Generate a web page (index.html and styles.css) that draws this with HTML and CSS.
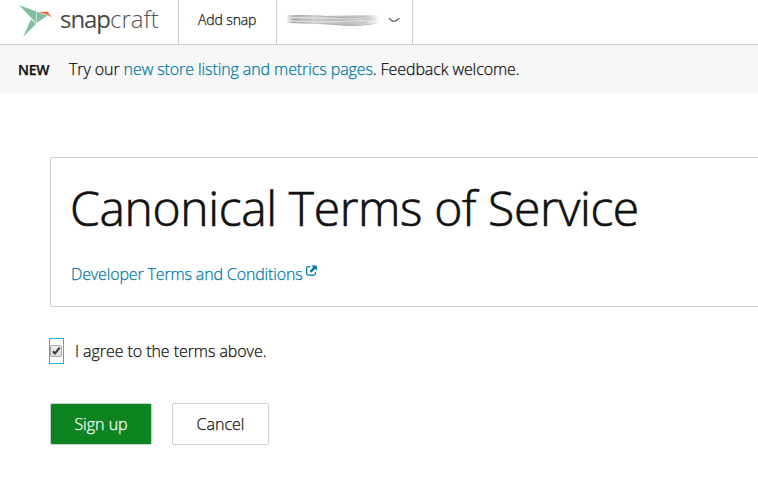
FILE: index.html
```
<!DOCTYPE html>
<html lang="en">
<head>
<meta charset="utf-8">
<title>Canonical Terms of Service</title>
<link rel="stylesheet" href="styles.css">
</head>
<body>
<header class="header">
  <a class="logo">
    <svg class="logo-mark" width="34" height="32" viewBox="0 0 34 32">
      <path fill="#82bea0" d="M0 0 17.200 6.600V18.300z"/>
      <path fill="#82bea0" d="M17.700 6.800 28.600 10.500 17.700 18z"/>
      <path fill="#82bea0" d="M4.200 31.700 12 14.200 17 18.900z"/>
      <path fill="#fa6441" d="M19.500 6.800H28.900L32.600 12.400 28.800 10z"/>
    </svg>
    <span class="logo-text"><span class="logo-strong">snap</span><span class="logo-light">craft</span></span>
  </a>
  <a class="nav-item nav-add">Add snap</a>
  <div class="nav-item nav-user">
    <svg class="smear" width="94" height="14" viewBox="0 0 94 14" fill="none">
      <defs>
        <linearGradient id="smear" gradientUnits="userSpaceOnUse" x1="0" y1="0" x2="94" y2="0">
          <stop offset="0" stop-color="#aaa" stop-opacity="0"/>
          <stop offset=".08" stop-color="#a6a6a6"/>
          <stop offset=".3" stop-color="#c2c2c2"/>
          <stop offset=".62" stop-color="#aaa"/>
          <stop offset=".85" stop-color="#b8b8b8"/>
          <stop offset="1" stop-color="#ccc" stop-opacity="0"/>
        </linearGradient>
      </defs>
      <path fill="url(#smear)" opacity=".75" d="M1 2.500 30 3 60 2.500 93 2V11L60 12.500 30 11 1 10z"/>
      <path stroke="url(#smear)" stroke-width="1.200" d="M1 3Q24 2 46 4T93 4M1 6Q30 8 52 6T93 7M1 9.500Q24 9 50 11.500T93 9.500"/>
      <path stroke="#eee" stroke-width="1" opacity=".7" d="M3 4.600Q30 5 48 5.500T88 5M3 8Q30 10 56 8.500T88 8.500"/>
    </svg>
    <svg class="chevron" width="12" height="6" viewBox="0 0 12 6"><path fill="none" stroke="#666" stroke-width="1.300" d="M.6 1.200 4 3.600Q6 5 8 3.600L11.400 1.200"/></svg>
  </div>
</header>
<div class="banner">
  <strong class="banner-tag">NEW</strong>
  <p class="banner-text">Try our <a class="link">new store listing and metrics pages</a>. Feedback welcome.</p>
</div>
<main class="main">
  <section class="card">
    <h1 class="title">Canonical Terms of Service</h1>
    <p class="terms"><a class="link">Developer Terms and Conditions</a><svg class="external" width="11" height="11" viewBox="0 0 11 11"><path fill="none" stroke="#007aa6" stroke-width="1.200" d="M4.500 1.700H2Q.7 1.700.7 3V9Q.7 10.200 2 10.200H8Q9.300 10.200 9.300 9V6.800"/><path fill="#007aa6" d="M5.400.4H10.800V5.800L9 4 5.300 7.700 3.600 6 7.200 2.200z"/></svg></p>
  </section>
  <label class="agree">
    <span class="checkbox"><svg width="13" height="13" viewBox="0 0 13 13"><defs><linearGradient id="box" x2="0" y2="1"><stop stop-color="#eee"/><stop offset="1" stop-color="#ddd"/></linearGradient></defs><rect x=".5" y=".5" width="11" height="11" rx="1.500" fill="url(#box)" stroke="#a8a8a8"/><path fill="none" stroke="#3c3c3c" stroke-width="2.100" d="M2.800 6.300 5 8.500 9.700 2.600"/></svg></span>
    <span class="agree-text">I agree to the terms above.</span>
  </label>
  <div class="actions">
    <button class="button button-primary">Sign up</button>
    <button class="button button-cancel">Cancel</button>
  </div>
</main>
</body>
</html>
```
FILE: styles.css
```
* { box-sizing: border-box; }
body {
  margin: 0;
  background: #fff;
  color: #111;
  font: 300 16px/24px "Open Sans", sans-serif;
  -webkit-text-stroke: .25px;
}
h1, p { margin: 0; }
.header {
  display: flex;
  height: 45px;
  border-bottom: 1px solid #cdcdcd;
}
.logo {
  display: flex;
  width: 178px;
  padding-left: 19px;
}
.logo-mark { margin-top: 5px; flex: none; }
.logo-text {
  margin: 2px 0 0 7px;
  color: #464646;
  font-size: 24px;
  line-height: 34px;
  white-space: nowrap;
  -webkit-text-stroke: 0;
}
.logo-strong { font-weight: 400; letter-spacing: -1.05px; }
.logo-light { font-weight: 300; color: #555; }
.nav-item {
  display: flex;
  align-items: center;
  border-left: 1px solid #cdcdcd;
}
.nav-add {
  width: 98px;
  padding: 0 0 4px 19px;
  font-size: 14px;
  letter-spacing: -.12px;
}
.nav-user {
  width: 137px;
  padding: 0 0 4px 9px;
  border-right: 1px solid #cdcdcd;
}
.smear { filter: blur(.6px); }
.chevron { margin-left: 8px; }
.banner {
  display: flex;
  align-items: center;
  height: 48px;
  padding-left: 18px;
  background: #f7f7f7;
}
.banner-tag {
  width: 51px;
  padding-top: 1px;
  font-size: 14px;
  font-weight: 600;
  letter-spacing: -.25px;
}
.banner-text { letter-spacing: -.09px; white-space: nowrap; }
.link { color: #007aa6; }
.main { padding: 64px 0 0 50px; }
.card {
  height: 150px;
  padding: 20px 0 20px 20px;
  border: 1px solid #cdcdcd;
  border-right: 0;
  border-radius: 2px 0 0 2px;
}
.title {
  margin: -2px 0 0 -1px;
  font-size: 48px;
  font-weight: 300;
  line-height: 64px;
  letter-spacing: -.36px;
  -webkit-text-stroke: .7px;
}
.terms {
  display: flex;
  margin-top: 22px;
  letter-spacing: -.14px;
}
.external { margin: 3px 0 0 3px; }
.agree {
  display: flex;
  align-items: center;
  gap: 11px;
  height: 26px;
  margin: 31px 0 0 -1px;
}
.agree-text { letter-spacing: -.06px; }
.checkbox {
  display: flex;
  align-items: center;
  width: 15px;
  height: 26px;
  border: 1px solid #19b6ee;
}
.actions {
  display: flex;
  gap: 20px;
  margin-top: 39px;
}
.button {
  height: 42px;
  padding: 0;
  border: 1px solid #cdcdcd;
  border-radius: 2px;
  background: #fff;
  color: #111;
  font: inherit;
}
.button-primary {
  width: 102px;
  background: #0e8420;
  color: #fff;
}
.button-cancel { width: 97px; }
```
